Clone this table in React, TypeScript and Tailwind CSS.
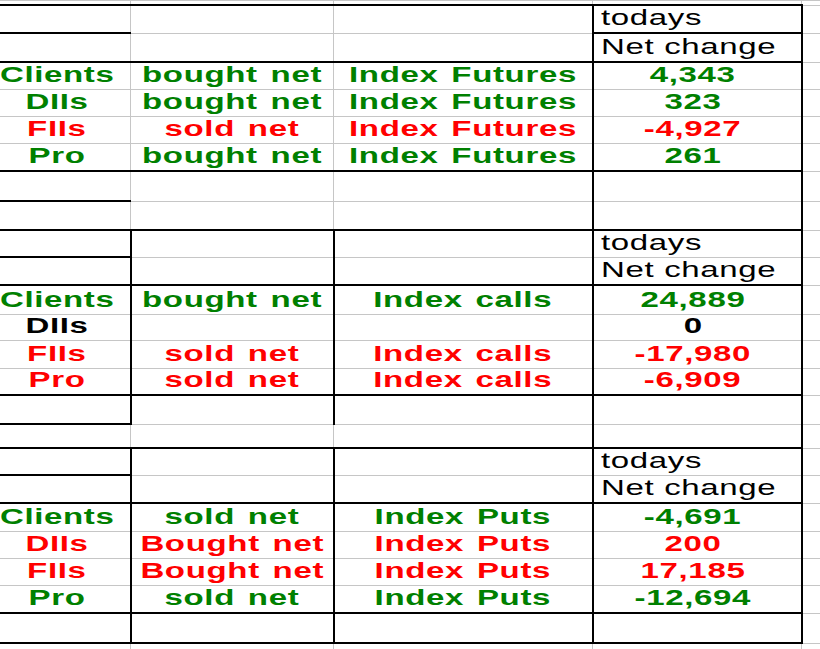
type Cell = { t: string; c: string };

type Row = {
  h: string;
  top: string;
  vb: boolean;
  vd: boolean;
  head?: string;
  cells?: Cell[];
};

const G = "text-[#008000]";
const R = "text-[#ff0000]";
const K = "text-black";

const rows: Row[] = [
  { h: "h-[1px]", top: "", vb: false, vd: false },
  { h: "h-[28px]", top: "ABCD", vb: false, vd: true, head: "todays" },
  { h: "h-[29px]", top: "AD", vb: false, vd: true, head: "Net change" },
  { h: "h-[27px]", top: "ABCD", vb: false, vd: true, cells: [{ t: "Clients", c: G }, { t: "bought net", c: G }, { t: "Index Futures", c: G }, { t: "4,343", c: G }] },
  { h: "h-[27px]", top: "", vb: false, vd: true, cells: [{ t: "DIIs", c: G }, { t: "bought net", c: G }, { t: "Index Futures", c: G }, { t: "323", c: G }] },
  { h: "h-[27px]", top: "", vb: false, vd: true, cells: [{ t: "FIIs", c: R }, { t: "sold net", c: R }, { t: "Index Futures", c: R }, { t: "-4,927", c: R }] },
  { h: "h-[28px]", top: "", vb: false, vd: true, cells: [{ t: "Pro", c: G }, { t: "bought net", c: G }, { t: "Index Futures", c: G }, { t: "261", c: G }] },
  { h: "h-[30px]", top: "ABCD", vb: false, vd: true },
  { h: "h-[29px]", top: "A", vb: false, vd: true },
  { h: "h-[27px]", top: "ABCD", vb: true, vd: true, head: "todays" },
  { h: "h-[28px]", top: "A", vb: true, vd: true, head: "Net change" },
  { h: "h-[29px]", top: "ABCD", vb: true, vd: true, cells: [{ t: "Clients", c: G }, { t: "bought net", c: G }, { t: "Index calls", c: G }, { t: "24,889", c: G }] },
  { h: "h-[26px]", top: "", vb: true, vd: true, cells: [{ t: "DIIs", c: K }, { t: "", c: K }, { t: "", c: K }, { t: "0", c: K }] },
  { h: "h-[28px]", top: "", vb: true, vd: true, cells: [{ t: "FIIs", c: R }, { t: "sold net", c: R }, { t: "Index calls", c: R }, { t: "-17,980", c: R }] },
  { h: "h-[27px]", top: "", vb: true, vd: true, cells: [{ t: "Pro", c: R }, { t: "sold net", c: R }, { t: "Index calls", c: R }, { t: "-6,909", c: R }] },
  { h: "h-[29px]", top: "ABCD", vb: true, vd: true },
  { h: "h-[24px]", top: "A", vb: false, vd: true },
  { h: "h-[27px]", top: "ABCD", vb: true, vd: true, head: "todays" },
  { h: "h-[28px]", top: "A", vb: true, vd: true, head: "Net change" },
  { h: "h-[28px]", top: "ABCD", vb: true, vd: true, cells: [{ t: "Clients", c: G }, { t: "sold net", c: G }, { t: "Index Puts", c: G }, { t: "-4,691", c: G }] },
  { h: "h-[27px]", top: "", vb: true, vd: true, cells: [{ t: "DIIs", c: R }, { t: "Bought net", c: R }, { t: "Index Puts", c: R }, { t: "200", c: R }] },
  { h: "h-[27px]", top: "", vb: true, vd: true, cells: [{ t: "FIIs", c: R }, { t: "Bought net", c: R }, { t: "Index Puts", c: R }, { t: "17,185", c: R }] },
  { h: "h-[28px]", top: "", vb: true, vd: true, cells: [{ t: "Pro", c: G }, { t: "sold net", c: G }, { t: "Index Puts", c: G }, { t: "-12,694", c: G }] },
  { h: "h-[30px]", top: "ABCD", vb: true, vd: true },
  { h: "h-[20px]", top: "ABCD", vb: false, vd: false },
];

const COLS = ["A", "B", "C", "D"];

// the sheet capture is stretched sideways, so text is widened to match
const Stretch = ({ text, left }: { text: string; left?: boolean }) => (
  <span
    className={
      left
        ? "inline-block origin-left scale-x-[1.5] tracking-[0.02em] whitespace-nowrap"
        : "inline-block scale-x-[1.5] tracking-[0.02em] [word-spacing:2px] whitespace-nowrap"
    }
  >
    {text}
  </span>
);

export default function App() {
  return (
    <div className="w-[820px] h-[649px] overflow-hidden bg-white font-['Liberation_Sans',Arial,sans-serif] text-[22px] leading-[22px]">
      <table className="-ml-[17px] table-fixed border-collapse w-[858px]">
        <colgroup>
          <col className="w-[147px]" />
          <col className="w-[203px]" />
          <col className="w-[259px]" />
          <col className="w-[209px]" />
          <col className="w-[40px]" />
        </colgroup>
        <tbody>
          {rows.map((row, i) => (
            <tr key={i} className={row.h}>
              {COLS.map((col, j) => {
                const blackTop = row.top.includes(col);
                const blackLeft = (j === 1 || j === 2) ? row.vb : j === 3 ? row.vd : false;
                const cell = row.cells?.[j];
                let content: React.ReactNode = null;
                let tone = "";
                let pad = "";
                if (j === 3 && row.head) {
                  content = <Stretch text={row.head} left />;
                  tone = "text-black font-normal text-left";
                  pad = "pl-[7px]";
                } else if (cell && cell.t) {
                  content = <Stretch text={cell.t} />;
                  tone = cell.c + " font-bold text-center";
                  pad = j === 3 ? "pr-[8px]" : "";
                }
                return (
                  <td
                    key={col}
                    className={[
                      "p-0 pb-[3px] align-bottom border border-[#c6c6c6] overflow-visible",
                      blackTop ? "border-t-2 border-t-black" : "",
                      blackLeft ? "border-l-2 border-l-black" : "",
                      tone,
                      pad,
                    ].join(" ")}
                  >
                    {content}
                  </td>
                );
              })}
              <td
                className={[
                  "p-0 border border-[#c6c6c6]",
                  row.vd ? "border-l-2 border-l-black" : "",
                ].join(" ")}
              />
            </tr>
          ))}
        </tbody>
      </table>
    </div>
  );
}
